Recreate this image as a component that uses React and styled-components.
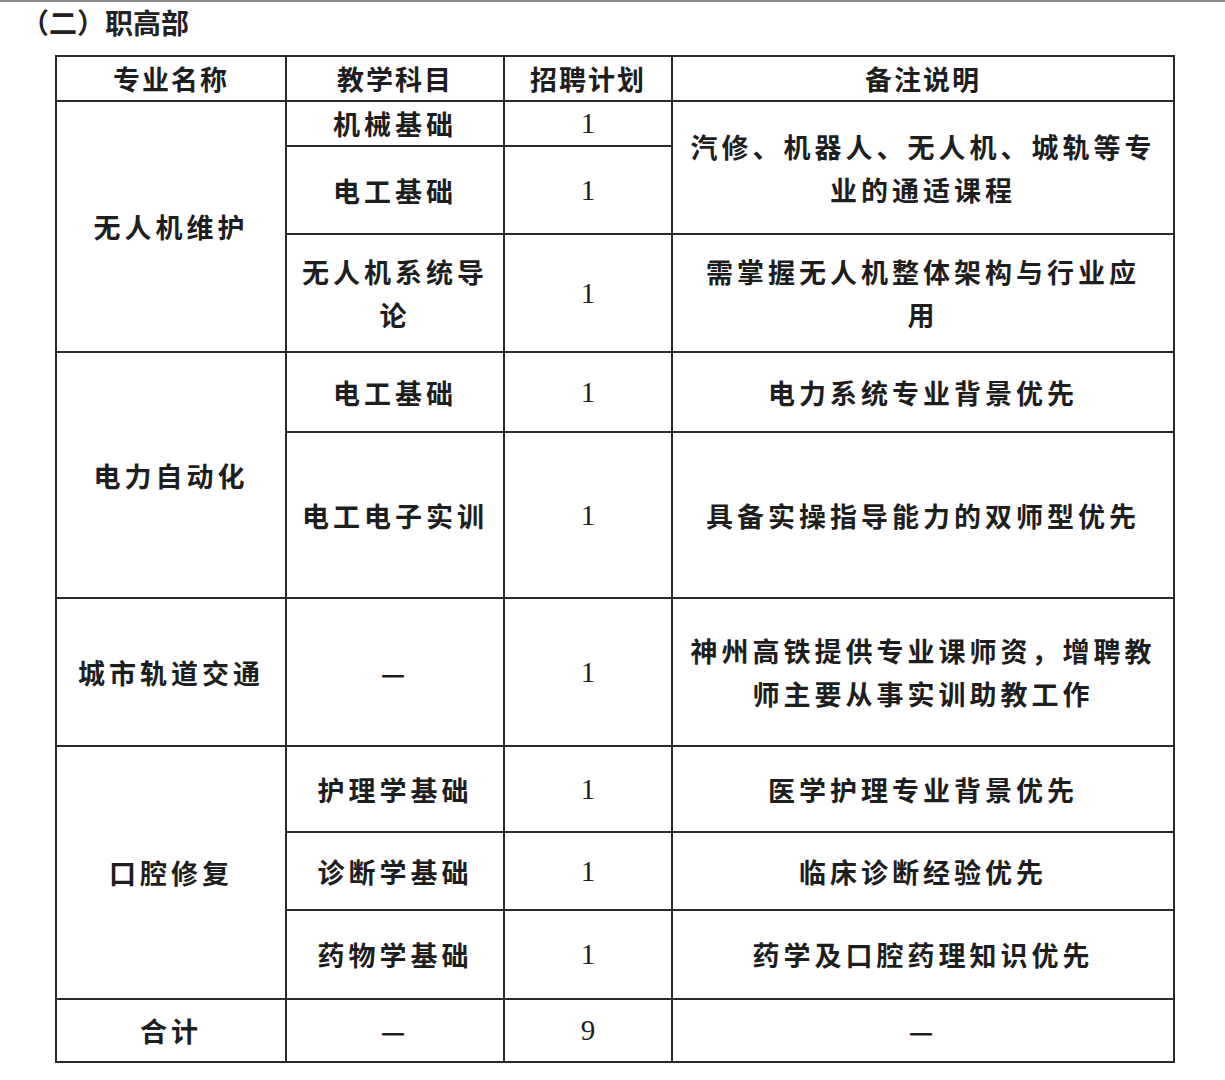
import React from "react";
import styled, { createGlobalStyle } from "styled-components";

const Global = createGlobalStyle`
  html, body {
    margin: 0;
    background: #fff;
  }
  body {
    font-family: "Noto Sans CJK SC", "Liberation Sans", sans-serif;
    color: #1c1c1c;
  }
`;

const Page = styled.div`
  width: 1225px;
  height: 1080px;
  border-top: 2px solid #8a8a8a;
  box-sizing: border-box;
  overflow: hidden;
`;

const Title = styled.h2`
  margin: 0;
  padding: 3px 0 0 21px;
  height: 35px;
  line-height: 35px;
  font-size: 28px;
  font-weight: 700;
  color: #222;
`;

const Table = styled.table`
  margin: 15px 0 0 55px;
  border-collapse: collapse;
  table-layout: fixed;
  width: 1118px;
  border: 2.5px solid #262626;
`;

const Row = styled.tr`
  height: ${(p) => p.h}px;
`;

const Cell = styled.td`
  border: 2px solid #2a2a2a;
  padding: 0 6px;
  text-align: center;
  vertical-align: middle;
  font-size: 27px;
  font-weight: 700;
  letter-spacing: 4px;
  line-height: 43px;
  color: #1e1e1e;
`;

const Head = styled(Cell).attrs({ as: "th" })`
  letter-spacing: 2px;
`;

const Num = styled(Cell)`
  font-family: "Liberation Serif", "DejaVu Serif", serif;
  font-size: 29px;
  font-weight: 400;
  letter-spacing: 0;
`;

const Note = styled(Cell)`
  padding: 0 10px;
  white-space: nowrap;
`;

const cols = [230, 218, 168, 502];

export default function App() {
  return (
    <Page>
      <Global />
      <Title>（二）职高部</Title>
      <Table>
        <colgroup>
          {cols.map((w, i) => (
            <col key={i} style={{ width: w }} />
          ))}
        </colgroup>
        <tbody>
          <Row h={44}>
            <Head>专业名称</Head>
            <Head>教学科目</Head>
            <Head>招聘计划</Head>
            <Head>备注说明</Head>
          </Row>
          <Row h={45}>
            <Cell rowSpan={3}>无人机维护</Cell>
            <Cell>机械基础</Cell>
            <Num>1</Num>
            <Note rowSpan={2}>
              汽修、机器人、无人机、城轨等专
              <br />
              业的通适课程
            </Note>
          </Row>
          <Row h={88}>
            <Cell>电工基础</Cell>
            <Num>1</Num>
          </Row>
          <Row h={118}>
            <Cell>无人机系统导论</Cell>
            <Num>1</Num>
            <Note>
              需掌握无人机整体架构与行业应
              <br />用
            </Note>
          </Row>
          <Row h={80}>
            <Cell rowSpan={2}>电力自动化</Cell>
            <Cell>电工基础</Cell>
            <Num>1</Num>
            <Note>电力系统专业背景优先</Note>
          </Row>
          <Row h={166}>
            <Cell>电工电子实训</Cell>
            <Num>1</Num>
            <Note>具备实操指导能力的双师型优先</Note>
          </Row>
          <Row h={148}>
            <Cell>城市轨道交通</Cell>
            <Cell>—</Cell>
            <Num>1</Num>
            <Note>
              神州高铁提供专业课师资，增聘教
              <br />
              师主要从事实训助教工作
            </Note>
          </Row>
          <Row h={86}>
            <Cell rowSpan={3}>口腔修复</Cell>
            <Cell>护理学基础</Cell>
            <Num>1</Num>
            <Note>医学护理专业背景优先</Note>
          </Row>
          <Row h={78}>
            <Cell>诊断学基础</Cell>
            <Num>1</Num>
            <Note>临床诊断经验优先</Note>
          </Row>
          <Row h={89}>
            <Cell>药物学基础</Cell>
            <Num>1</Num>
            <Note>药学及口腔药理知识优先</Note>
          </Row>
          <Row h={63}>
            <Cell>合计</Cell>
            <Cell>—</Cell>
            <Num>9</Num>
            <Cell>—</Cell>
          </Row>
        </tbody>
      </Table>
    </Page>
  );
}
